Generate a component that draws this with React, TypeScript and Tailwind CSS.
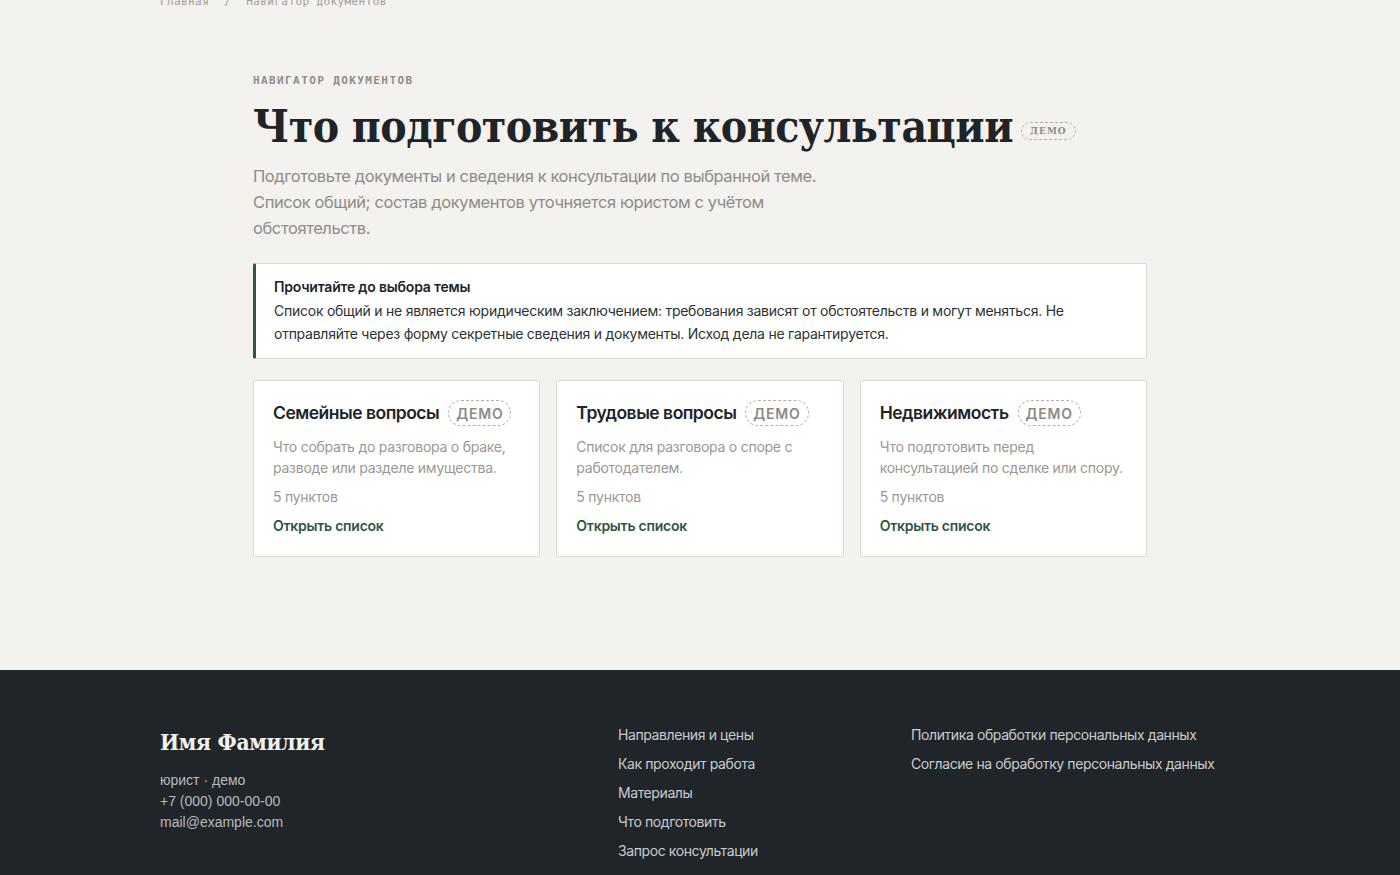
import React from "react";

const sans = { fontFamily: "Inter, 'Noto Sans', sans-serif" } as const;

function Badge({ serif = false }: { serif?: boolean }) {
  if (serif) {
    return (
      <span className="ml-2 inline-flex h-[18px] items-center rounded-full border border-dashed border-[#b3b1ab] px-[8px] align-middle font-['DejaVu_Serif',serif] text-[10px] font-bold tracking-[1px] text-[#8d8b86] relative top-[0px]">
        ДЕМО
      </span>
    );
  }
  return (
    <span className="inline-flex h-[26px] shrink-0 items-center rounded-full border border-dashed border-[#b3b1ab] px-[7px] text-[14px] font-semibold tracking-[0.8px] text-[#8d8b86]">
      ДЕМО
    </span>
  );
}

const cards = [
  {
    title: "Семейные вопросы",
    desc: "Что собрать до разговора о браке, разводе или разделе имущества.",
  },
  {
    title: "Трудовые вопросы",
    desc: "Список для разговора о споре с работодателем.",
  },
  {
    title: "Недвижимость",
    desc: "Что подготовить перед консультацией по сделке или спору.",
  },
];

export default function App() {
  return (
    <div className="min-h-screen bg-[#f3f2ee]" style={sans}>
      <main className="mx-auto w-[1080px] pb-[113px]">
        <div className="-mt-[6px] font-['DejaVu_Sans_Mono',monospace] text-[11px] leading-[16px] tracking-[0.4px] text-[#a09e99]">
          Главная <span className="mx-2">/</span> Навигатор документов
        </div>
        <div className="mx-auto w-[894px] pt-[63px]">
          <div className="font-['DejaVu_Sans_Mono',monospace] text-[11px] font-semibold leading-[16px] tracking-[1.4px] text-[#8f8d88]">
            НАВИГАТОР ДОКУМЕНТОВ
          </div>
          <h1 className="mt-[10px] whitespace-nowrap font-['DejaVu_Serif',serif] text-[44px] font-bold leading-[56px] tracking-[-0.5px] text-[#1e2428] [font-stretch:condensed]">
            Что подготовить к консультации
            <Badge serif />
          </h1>
          <p className="mt-[8px] max-w-[590px] text-[16.5px] leading-[26px] tracking-[-0.4px] text-[#8e8c88]">
            Подготовьте документы и сведения к консультации по выбранной теме. Список общий; состав документов уточняется юристом с учётом обстоятельств.
          </p>
          <div className="mt-[22px] rounded-[2px] border border-[#dcd9d3] border-l-[3px] border-l-[#2f5646] bg-white px-[18px] pt-[13px] pb-[13px]">
            <div className="text-[14px] font-semibold leading-[20px] tracking-[-0.2px] text-[#1e2428]">
              Прочитайте до выбора темы
            </div>
            <p className="mt-[2px] text-[14px] leading-[23px] tracking-[-0.25px] text-[#2c3236]">
              Список общий и не является юридическим заключением: требования зависят от обстоятельств и могут меняться. Не отправляйте через форму секретные сведения и документы. Исход дела не гарантируется.
            </p>
          </div>
          <div className="mt-[21px] grid grid-cols-3 gap-[16px]">
            {cards.map((c) => (
              <div
                key={c.title}
                className="h-[177px] rounded-[2px] border border-[#dcd9d3] bg-white px-[19px] pt-[19px]"
              >
                <div className="flex items-center gap-[9px]">
                  <span className="whitespace-nowrap text-[17.5px] font-semibold leading-[26px] tracking-[-0.5px] text-[#1e2428]">
                    {c.title}
                  </span>
                  <Badge />
                </div>
                <p className="mt-[10px] text-[14px] leading-[21px] tracking-[-0.25px] text-[#9a9894]">
                  {c.desc}
                </p>
                <div className="mt-[8px] text-[14px] leading-[21px] tracking-[-0.25px] text-[#9a9894]">
                  5 пунктов
                </div>
                <div className="mt-[8px] text-[14px] font-semibold leading-[21px] tracking-[-0.25px] text-[#2f5646]">
                  Открыть список
                </div>
              </div>
            ))}
          </div>
        </div>
      </main>
      <footer className="bg-[#1f2529] pt-[55px] pb-[40px]">
        <div className="mx-auto grid w-[1080px] grid-cols-[410px_245px_1fr] gap-x-[48px]">
          <div>
            <div className="pt-[2px] font-['DejaVu_Serif',serif] text-[22.5px] font-bold leading-[30px] tracking-[-0.3px] text-[#f3f2ee] [font-stretch:condensed]">
              Имя Фамилия
            </div>
            <div className="mt-[13px] font-['Liberation_Sans',sans-serif] text-[14px] leading-[21px] text-[#b9bcbd]">
              <div>юрист · демо</div>
              <div>+7 (000) 000-00-00</div>
              <div>mail@example.com</div>
            </div>
          </div>
          <div className="flex flex-col gap-[9px] text-[14px] leading-[20px] tracking-[-0.4px] text-[#c9cccd]">
            <span>Направления и цены</span>
            <span>Как проходит работа</span>
            <span>Материалы</span>
            <span>Что подготовить</span>
            <span>Запрос консультации</span>
          </div>
          <div className="flex flex-col gap-[9px] text-[14px] leading-[20px] tracking-[-0.4px] text-[#c9cccd]">
            <span>Политика обработки персональных данных</span>
            <span>Согласие на обработку персональных данных</span>
          </div>
        </div>
      </footer>
    </div>
  );
}
